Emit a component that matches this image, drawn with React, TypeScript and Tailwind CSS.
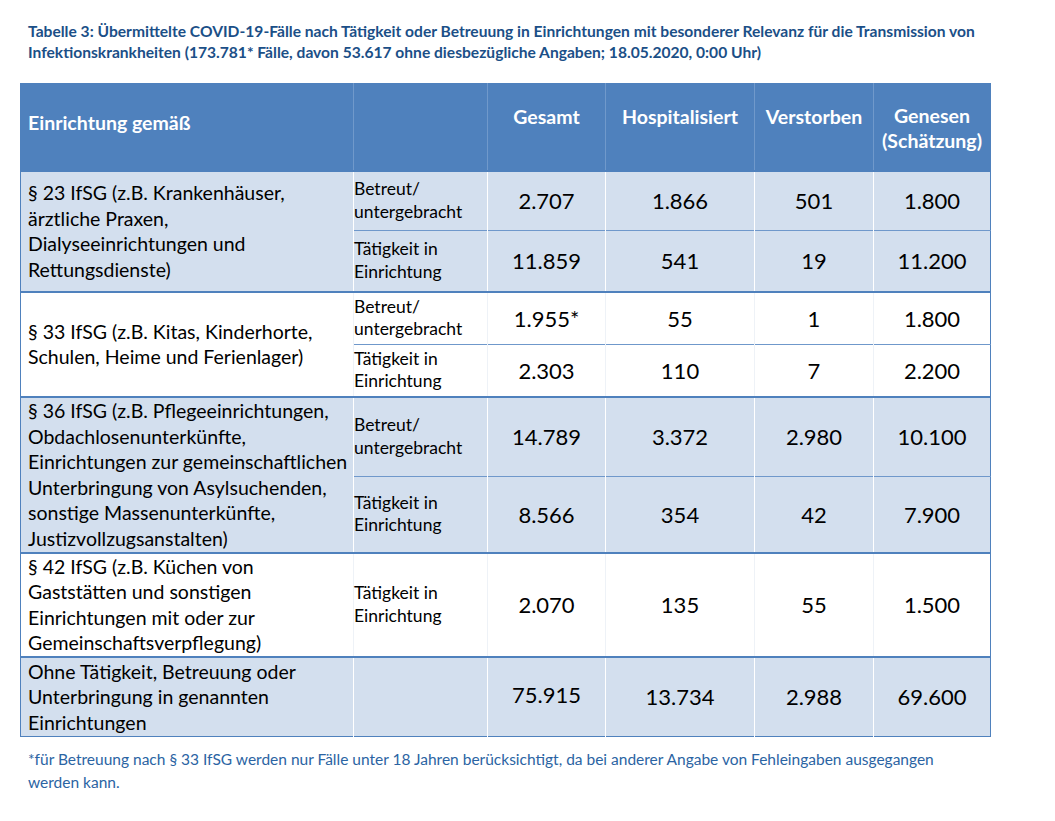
const rows = [
  {
    label: ["§ 23 IfSG (z.B. Krankenhäuser,", "ärztliche Praxen,", "Dialyseeinrichtungen und", "Rettungsdienste)"],
    shade: true,
    subs: [
      { betreut: true, h: "h-[60px]", v: ["2.707", "1.866", "501", "1.800"] },
      { betreut: false, h: "h-[61px]", v: ["11.859", "541", "19", "11.200"] },
    ],
  },
  {
    label: ["§ 33 IfSG (z.B. Kitas, Kinderhorte,", "Schulen, Heime und Ferienlager)"],
    shade: false,
    subs: [
      { betreut: true, h: "h-[53px]", v: ["1.955*", "55", "1", "1.800"] },
      { betreut: false, h: "h-[52px]", v: ["2.303", "110", "7", "2.200"] },
    ],
  },
  {
    label: [
      "§ 36 IfSG (z.B. Pflegeeinrichtungen,",
      "Obdachlosenunterkünfte,",
      "Einrichtungen zur gemeinschaftlichen",
      "Unterbringung von Asylsuchenden,",
      "sonstige Massenunterkünfte,",
      "Justizvollzugsanstalten)",
    ],
    shade: true,
    subs: [
      { betreut: true, h: "h-[80px]", v: ["14.789", "3.372", "2.980", "10.100"] },
      { betreut: false, h: "h-[76px]", v: ["8.566", "354", "42", "7.900"] },
    ],
  },
  {
    label: ["§ 42 IfSG (z.B. Küchen von", "Gaststätten und sonstigen", "Einrichtungen mit oder zur", "Gemeinschaftsverpflegung)"],
    shade: false,
    subs: [{ betreut: false, h: "h-[104px]", v: ["2.070", "135", "55", "1.500"] }],
  },
]

function Lines({ lines }: { lines: string[] }) {
  return (
    <>
      {lines.map((l) => (
        <div key={l} className="whitespace-nowrap">
          {l}
        </div>
      ))}
    </>
  )
}

export default function App() {
  return (
    <div className="w-[1055px] h-[821px] bg-white font-['Lato',sans-serif] text-black">
      <div className="px-[28px] pt-[21px] text-[15.6px] leading-[21px] font-bold text-[#1b4f87] whitespace-nowrap">
        Tabelle 3: Übermittelte COVID-19-Fälle nach Tätigkeit oder Betreuung in Einrichtungen mit besonderer Relevanz für die Transmission von
        <br />
        Infektionskrankheiten (173.781* Fälle, davon 53.617 ohne diesbezügliche Angaben; 18.05.2020, 0:00 Uhr)
      </div>

      <table className="ml-[20px] mt-[20px] w-[970px] table-fixed border-collapse border border-[#4f81bd]">
        <colgroup>
          <col className="w-[333px]" />
          <col className="w-[134px]" />
          <col className="w-[118px]" />
          <col className="w-[149px]" />
          <col className="w-[119px]" />
          <col className="w-[117px]" />
        </colgroup>
        <thead>
          <tr className="h-[87px] bg-[#4f81bd] text-white text-[19.5px] font-bold">
            <th className="border-r border-[#7099cb] text-left align-middle pl-[7px] pr-[8px] pb-[8px]">Einrichtung gemäß</th>
            <th className="border-r border-[#7099cb]"></th>
            {["Gesamt", "Hospitalisiert", "Verstorben"].map((h) => (
              <th key={h} className="border-r border-[#7099cb] align-top pt-[18px] text-center whitespace-nowrap">
                {h}
              </th>
            ))}
            <th className="align-top pt-[19px] text-center leading-[25px]">
              Genesen
              <br />
              (Schätzung)
            </th>
          </tr>
        </thead>
        <tbody>
          {rows.map((g) =>
            g.subs.map((s, i) => (
              <tr
                key={g.label[0] + i}
                className={`${s.h} ${g.shade ? "bg-[#d3dfee]" : "bg-white"} ${
                  i === 0 ? "border-t-2 border-[#4f81bd]" : ""
                }`}
              >
                {i === 0 && (
                  <td
                    rowSpan={g.subs.length}
                    className={`align-middle pl-[7px] pr-[4px] text-[19.5px] leading-[25.5px] border-r ${
                      g.shade ? "border-white" : "border-[#eef2f7]"
                    }`}
                  >
                    <Lines lines={g.label} />
                  </td>
                )}
                <td
                  className={`align-middle pl-[0px] pr-[2px] text-[17.5px] leading-[22.5px] border-r whitespace-nowrap ${
                    g.shade ? "border-white" : "border-[#eef2f7]"
                  } ${i > 0 ? "border-t border-t-[#6f98cb]" : ""}`}
                >
                  {s.betreut ? (
                    <>
                      Betreut/
                      <br />
                      untergebracht
                    </>
                  ) : (
                    <>
                      Tätigkeit in
                      <br />
                      Einrichtung
                    </>
                  )}
                </td>
                {s.v.map((n, k) => (
                  <td
                    key={k}
                    className={`text-center align-middle text-[22px] ${
                      k < 3 ? (g.shade ? "border-r border-white" : "border-r border-[#eef2f7]") : ""
                    } ${i > 0 ? "border-t border-t-[#6f98cb]" : ""}`}
                  >
                    {n}
                  </td>
                ))}
              </tr>
            ))
          )}
          <tr className="h-[80px] bg-[#d3dfee] border-t-2 border-[#4f81bd]">
            <td className="align-middle pl-[7px] pr-[4px] text-[19.5px] leading-[25.5px] border-r border-white">
              <Lines lines={["Ohne Tätigkeit, Betreuung oder", "Unterbringung in genannten", "Einrichtungen"]} />
            </td>
            <td className="border-r border-white"></td>
            <td className="text-center align-middle text-[22px] border-r border-white pb-[5px]">75.915</td>
            <td className="text-center align-middle text-[22px] border-r border-white">13.734</td>
            <td className="text-center align-middle text-[22px] border-r border-white">2.988</td>
            <td className="text-center align-middle text-[22px]">69.600</td>
          </tr>
        </tbody>
      </table>

      <div className="px-[28px] pt-[11px] text-[15.5px] leading-[23px] text-[#2b64a3] whitespace-nowrap">
        *für Betreuung nach § 33 IfSG werden nur Fälle unter 18 Jahren berücksichtigt, da bei anderer Angabe von Fehleingaben ausgegangen
        <br />
        werden kann.
      </div>
    </div>
  )
}
